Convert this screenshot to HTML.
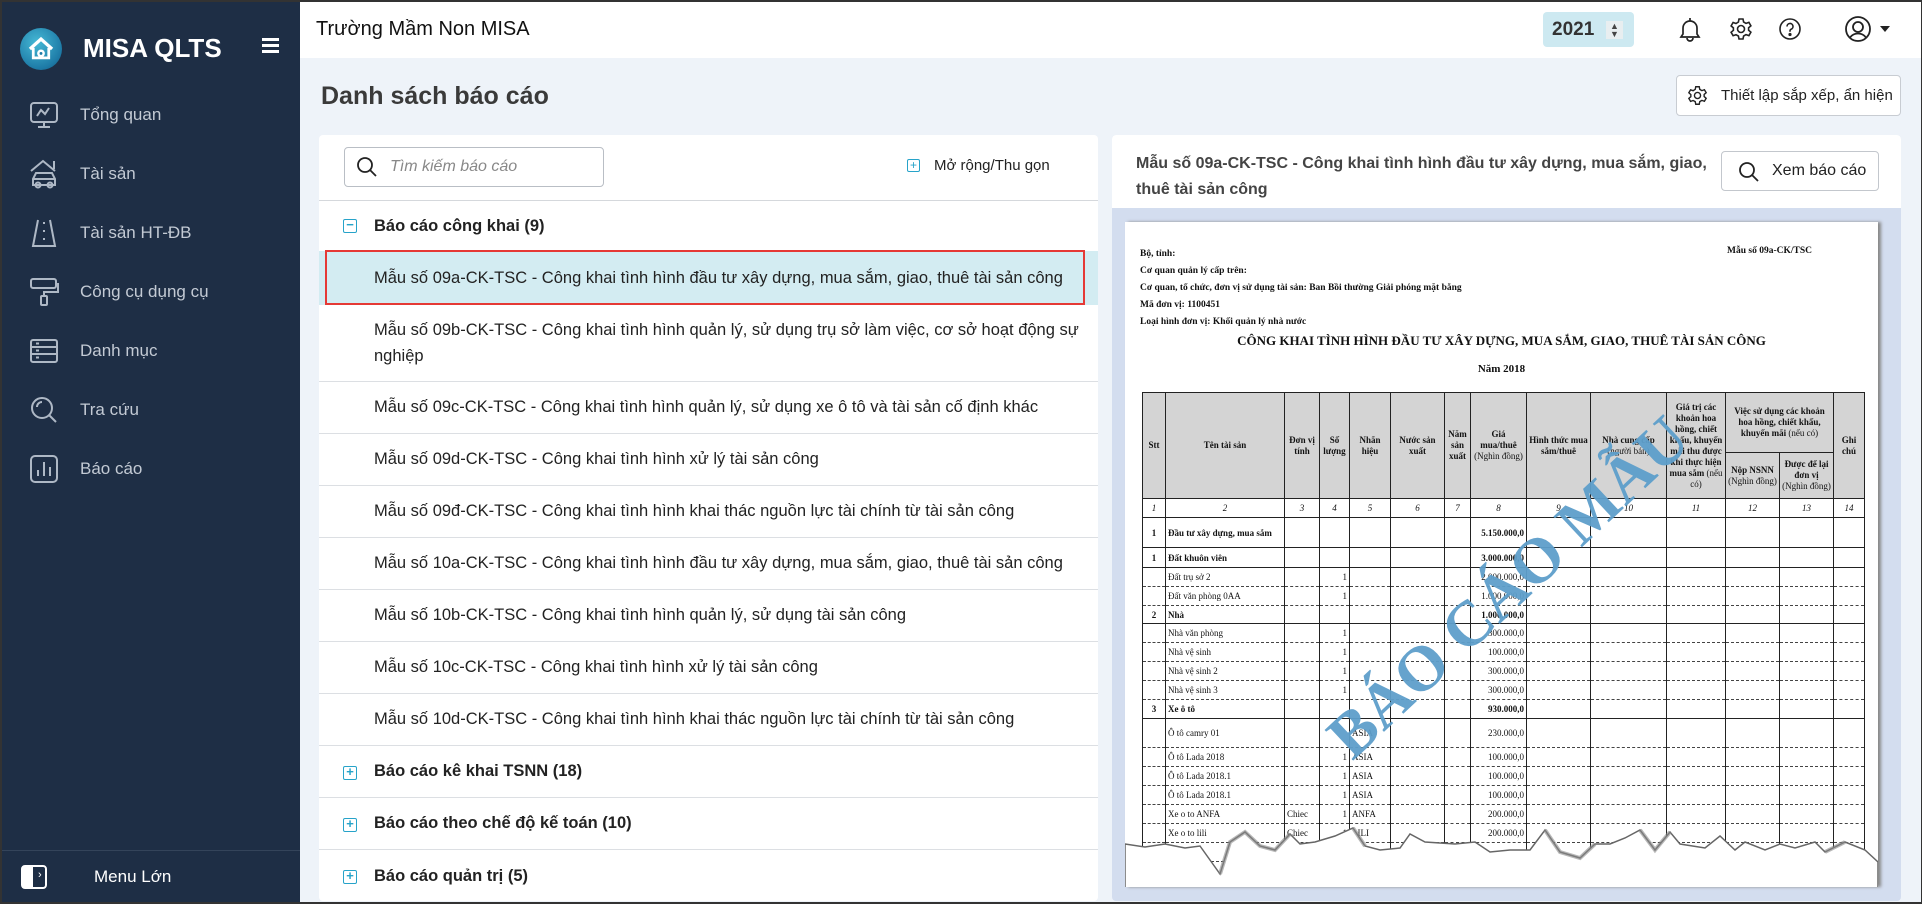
<!DOCTYPE html>
<html><head><meta charset="utf-8">
<style>
*{box-sizing:border-box;margin:0;padding:0}
body{width:1922px;height:904px;overflow:hidden;font-family:"Liberation Sans",sans-serif;background:#eef3f9;position:relative;color:#222}
.abs{position:absolute}
#frame{position:absolute;left:0;top:0;width:1922px;height:904px;border:2px solid #333;border-right-width:1px;pointer-events:none;z-index:50}
#side{left:0;top:0;width:300px;height:904px;background:#1e2e45}
.nav{position:absolute;left:28px;color:#c3cad4;font-size:17px;display:flex;align-items:center}
.nav svg{width:32px;height:32px;margin-right:20px}
#header{left:300px;top:0;width:1622px;height:58px;background:#fff}
.panel{background:#fff;border-radius:4px}
.row{position:absolute;left:0;width:779px;border-bottom:1px solid #dcdfe3;font-size:16.5px;color:#222;display:flex;align-items:center;padding-left:55px}
.grp{font-weight:bold;padding-left:55px}
.pm{position:absolute;left:24px;width:14px;height:14px;border:1.5px solid #27a3c9;border-radius:2px;color:#27a3c9;font-size:13px;line-height:10px;text-align:center;font-weight:bold}
.paper{font-family:"Liberation Serif",serif;color:#111}
table{border-collapse:collapse;table-layout:fixed;font-family:"Liberation Serif",serif;font-size:9px;color:#111}
td{border-left:1px solid #222;border-right:1px solid #222;border-bottom:1px dashed #444;padding:0 2px;overflow:hidden;white-space:nowrap}
tr.b td{border-bottom:1px solid #222;font-weight:bold}
thead td{border:1px solid #222;background:#d4d4d4;text-align:center;white-space:normal;line-height:11px;font-weight:bold}
.r{text-align:right}.c{text-align:center}
</style></head><body>
<div id="frame"></div>

<!-- SIDEBAR -->
<div id="side" class="abs">
  <div class="abs" style="left:20px;top:28px;width:42px;height:42px;border-radius:50%;background:radial-gradient(circle at 40% 35%,#46b9d6,#1d7aa6 70%,#15557a)">
    <svg width="42" height="42" viewBox="0 0 38 38"><path d="M9 19 L19 10 L29 19" fill="none" stroke="#fff" stroke-width="3"/><path d="M12 18v9h14v-9" fill="none" stroke="#fff" stroke-width="2.5"/><circle cx="19" cy="23" r="3.5" fill="#fff"/><circle cx="19" cy="23" r="1.3" fill="#1d7aa6"/></svg>
  </div>
  <div class="abs" style="left:83px;top:33px;color:#fff;font-weight:bold;font-size:26px">MISA QLTS</div>
  <div class="abs" style="left:262px;top:38px;width:17px">
    <div style="height:2.5px;background:#fff;margin-bottom:3.5px"></div><div style="height:2.5px;background:#fff;margin-bottom:3.5px"></div><div style="height:2.5px;background:#fff"></div></div>

  <div class="nav" style="top:99px"><svg viewBox="0 0 32 32" fill="none" stroke="#aeb8c5" stroke-width="2"><rect x="3" y="4" width="26" height="19" rx="3"/><path d="M9 17l4-6 4 4 4-6M16 23v5M10 28h12"/></svg>Tổng quan</div>
  <div class="nav" style="top:158px"><svg viewBox="0 0 32 32" fill="none" stroke="#aeb8c5" stroke-width="2"><path d="M3 13L15 3l12 10M26 3v8M5 21l3-6h16l3 6v6H5z M5 21h22"/><circle cx="10" cy="27" r="2.5"/><circle cx="22" cy="27" r="2.5"/></svg>Tài sản</div>
  <div class="nav" style="top:217px"><svg viewBox="0 0 32 32" fill="none" stroke="#aeb8c5" stroke-width="2"><path d="M10 3L5 29h22L22 3"/><path d="M16 5v4M16 13v4M16 21v4" stroke-dasharray="2 2"/></svg>Tài sản HT-ĐB</div>
  <div class="nav" style="top:276px"><svg viewBox="0 0 32 32" fill="none" stroke="#aeb8c5" stroke-width="2"><rect x="3" y="3" width="25" height="9" rx="2"/><path d="M28 8h2v8H16v4"/><rect x="13" y="20" width="6" height="9" rx="1"/></svg>Công cụ dụng cụ</div>
  <div class="nav" style="top:335px"><svg viewBox="0 0 32 32" fill="none" stroke="#aeb8c5" stroke-width="2"><rect x="3" y="5" width="26" height="22" rx="2"/><path d="M3 12h26M3 19h26M8 8.5h3M8 15.5h3M8 22.5h3"/></svg>Danh mục</div>
  <div class="nav" style="top:394px"><svg viewBox="0 0 32 32" fill="none" stroke="#aeb8c5" stroke-width="2"><circle cx="14" cy="14" r="10"/><path d="M21 21l7 7M9 13a5 5 0 0 1 5-5"/></svg>Tra cứu</div>
  <div class="nav" style="top:453px"><svg viewBox="0 0 32 32" fill="none" stroke="#aeb8c5" stroke-width="2"><rect x="3" y="3" width="26" height="26" rx="4"/><path d="M10 23v-6M16 23V9M22 23v-9"/></svg>Báo cáo</div>

  <div class="abs" style="left:0;top:850px;width:300px;height:1px;background:#34445a"></div>
  <div class="abs" style="left:21px;top:865px;width:26px;height:24px;border:2px solid #fff;border-radius:4px;background:linear-gradient(90deg,#fff 45%,transparent 45%)"></div>
  <div class="abs" style="left:38px;top:869px;color:#fff;font-size:11px">›</div>
  <div class="abs" style="left:94px;top:867px;color:#fff;font-size:17px">Menu Lớn</div>
</div>

<!-- HEADER -->
<div id="header" class="abs">
  <div class="abs" style="left:16px;top:18px;font-size:20px;color:#111">Trường Mầm Non MISA</div>
  <div class="abs" style="left:1243px;top:12px;width:91px;height:35px;background:#cde9f1;border-radius:4px">
    <div class="abs" style="left:9px;top:7px;font-size:19px;font-weight:bold;color:#333">2021</div>
    <div class="abs" style="left:63px;top:9px;width:17px;height:18px;background:#e8eef0;color:#444;font-size:9px;line-height:8px;text-align:center;padding-top:1px">▲<br>▼</div>
  </div>
  <svg class="abs" style="left:1378px;top:16px" width="24" height="26" viewBox="0 0 24 26" fill="none" stroke="#222" stroke-width="1.7"><path d="M12 2v3M5 18V12a7 7 0 0 1 14 0v6l2 3H3z M9 22a3 3 0 0 0 6 0"/></svg>
  <svg class="abs" style="left:1429px;top:17px" width="24" height="24" viewBox="0 0 24 24" fill="none" stroke="#222" stroke-width="1.6"><path d="M10 2h4l.6 3 2.4 1.4 2.9-1 2 3.4-2.3 2v2.4l2.3 2-2 3.4-2.9-1L14.6 19 14 22h-4l-.6-3L7 17.7l-2.9 1-2-3.4 2.3-2v-2.4l-2.3-2 2-3.4 2.9 1L9.4 5z"/><circle cx="12" cy="12" r="3.5"/></svg>
  <svg class="abs" style="left:1478px;top:17px" width="24" height="24" viewBox="0 0 24 24" fill="none" stroke="#222" stroke-width="1.6"><circle cx="12" cy="12" r="10"/><path d="M9 9.5a3 3 0 1 1 4 2.8c-.7.3-1 .8-1 1.7v.8"/><circle cx="12" cy="17.5" r=".8" fill="#222"/></svg>
  <svg class="abs" style="left:1544px;top:15px" width="28" height="28" viewBox="0 0 28 28" fill="none" stroke="#222" stroke-width="1.8"><circle cx="14" cy="14" r="12"/><circle cx="14" cy="12" r="5"/><path d="M6 22.5a10 10 0 0 1 16 0"/></svg>
  <div class="abs" style="left:1580px;top:26px;width:0;height:0;border-left:5px solid transparent;border-right:5px solid transparent;border-top:6px solid #222"></div>
</div>

<!-- Title -->
<div class="abs" style="left:321px;top:82px;font-size:25px;font-weight:bold;color:#3a3a3a">Danh sách báo cáo</div>
<div class="abs" style="left:1676px;top:75px;width:225px;height:41px;background:#fff;border:1px solid #c8ccd2;border-radius:4px;font-size:15px;color:#222;padding:11px 0 0 44px;white-space:nowrap">Thiết lập sắp xếp, ẩn hiện</div>
<svg class="abs" style="left:1687px;top:85px" width="21" height="21" viewBox="0 0 24 24" fill="none" stroke="#222" stroke-width="1.6"><path d="M10 2h4l.6 3 2.4 1.4 2.9-1 2 3.4-2.3 2v2.4l2.3 2-2 3.4-2.9-1L14.6 19 14 22h-4l-.6-3L7 17.7l-2.9 1-2-3.4 2.3-2v-2.4l-2.3-2 2-3.4 2.9 1L9.4 5z"/><circle cx="12" cy="12" r="3.5"/></svg>

<!-- LEFT PANEL -->
<div class="abs panel" style="left:319px;top:135px;width:779px;height:766px;overflow:hidden">
  <div class="abs" style="left:25px;top:12px;width:260px;height:40px;border:1px solid #b9bec5;border-radius:4px">
    <svg class="abs" style="left:11px;top:8px" width="22" height="22" viewBox="0 0 22 22" fill="none" stroke="#222" stroke-width="1.8"><circle cx="9" cy="9" r="7"/><path d="M14 14l6 6"/></svg>
    <div class="abs" style="left:45px;top:10px;font-size:16px;font-style:italic;color:#888">Tìm kiếm báo cáo</div>
  </div>
  <div class="abs" style="left:588px;top:24px;width:13px;height:13px;border:1.3px solid #27a3c9;border-radius:2px;color:#27a3c9;font-size:12px;line-height:10px;text-align:center">+</div>
  <div class="abs" style="left:615px;top:22px;font-size:15px;color:#222">Mở rộng/Thu gọn</div>
  <div class="abs" style="left:0;top:65px;width:779px;height:1px;background:#d5d8dc"></div>

  <div class="row grp" style="top:66px;height:50px;border:none"><span class="pm" style="top:18px">−</span>Báo cáo công khai (9)</div>
  <div class="row" style="top:116px;height:54px;background:#d3ecf2;border-bottom:none">Mẫu số 09a-CK-TSC - Công khai tình hình đầu tư xây dựng, mua sắm, giao, thuê tài sản công</div>
  <div class="abs" style="left:6px;top:115px;width:760px;height:55px;border:2px solid #e53935"></div>
  <div class="row" style="top:170px;height:77px;line-height:26px">Mẫu số 09b-CK-TSC - Công khai tình hình quản lý, sử dụng trụ sở làm việc, cơ sở hoạt động sự<br>nghiệp</div>
  <div class="row" style="top:247px;height:52px">Mẫu số 09c-CK-TSC - Công khai tình hình quản lý, sử dụng xe ô tô và tài sản cố định khác</div>
  <div class="row" style="top:299px;height:52px">Mẫu số 09d-CK-TSC - Công khai tình hình xử lý tài sản công</div>
  <div class="row" style="top:351px;height:52px">Mẫu số 09đ-CK-TSC - Công khai tình hình khai thác nguồn lực tài chính từ tài sản công</div>
  <div class="row" style="top:403px;height:52px">Mẫu số 10a-CK-TSC - Công khai tình hình đầu tư xây dựng, mua sắm, giao, thuê tài sản công</div>
  <div class="row" style="top:455px;height:52px">Mẫu số 10b-CK-TSC - Công khai tình hình quản lý, sử dụng tài sản công</div>
  <div class="row" style="top:507px;height:52px">Mẫu số 10c-CK-TSC - Công khai tình hình xử lý tài sản công</div>
  <div class="row" style="top:559px;height:52px">Mẫu số 10d-CK-TSC - Công khai tình hình khai thác nguồn lực tài chính từ tài sản công</div>
  <div class="row grp" style="top:611px;height:52px"><span class="pm" style="top:20px">+</span>Báo cáo kê khai TSNN (18)</div>
  <div class="row grp" style="top:663px;height:52px"><span class="pm" style="top:20px">+</span>Báo cáo theo chế độ kế toán (10)</div>
  <div class="row grp" style="top:715px;height:52px;border:none"><span class="pm" style="top:20px">+</span>Báo cáo quản trị (5)</div>
</div>

<!-- RIGHT PANEL -->
<div class="abs panel" style="left:1112px;top:135px;width:789px;height:766px;overflow:hidden;background:#d3ddef">
  <div class="abs" style="left:0;top:0;width:789px;height:73px;background:#fff"></div>
  <div class="abs" style="left:24px;top:16px;width:590px;font-size:16px;font-weight:bold;color:#444;line-height:26px">Mẫu số 09a-CK-TSC - Công khai tình hình đầu tư xây dựng, mua sắm, giao, thuê tài sản công</div>
  <div class="abs" style="left:609px;top:16px;width:158px;height:40px;border:1px solid #c3c7cd;border-radius:4px;background:#fff;font-size:16px;color:#222;padding:10px 0 0 50px">Xem báo cáo</div>
  <svg class="abs" style="left:626px;top:26px" width="22" height="22" viewBox="0 0 22 22" fill="none" stroke="#222" stroke-width="1.8"><circle cx="9" cy="9" r="7"/><path d="M14 14l6 6"/></svg>

  <!-- paper -->
  <div class="abs paper" style="left:13px;top:87px;width:753px;height:665px;background:#fff;overflow:hidden;box-shadow:3px 0 3px #888">
    <div class="abs" style="left:15px;top:24px;font-size:9.5px;font-weight:bold;line-height:17px">Bộ, tỉnh:<br>Cơ quan quản lý cấp trên:<br>Cơ quan, tổ chức, đơn vị sử dụng tài sản: Ban Bồi thường Giải phóng mặt bằng<br>Mã đơn vị: 1100451<br>Loại hình đơn vị: Khối quản lý nhà nước</div>
    <div class="abs" style="left:602px;top:24px;font-size:9.5px;font-weight:bold">Mẫu số 09a-CK/TSC</div>
    <div class="abs" style="left:0;width:753px;text-align:center;font-size:13px;font-weight:bold;top:111px">CÔNG KHAI TÌNH HÌNH ĐẦU TƯ XÂY DỰNG, MUA SẮM, GIAO, THUÊ TÀI SẢN CÔNG</div>
    <div class="abs" style="left:0;width:753px;top:141px;text-align:center;font-size:11px;font-weight:bold">Năm 2018</div>
    <table class="abs" style="left:17px;top:170px;width:722px">
      <colgroup><col style="width:23px"><col style="width:119px"><col style="width:35px"><col style="width:30px"><col style="width:41px"><col style="width:54px"><col style="width:26px"><col style="width:56px"><col style="width:64px"><col style="width:76px"><col style="width:59px"><col style="width:54px"><col style="width:54px"><col style="width:31px"></colgroup>
      <thead>
      <tr style="height:60px"><td rowspan="2">Stt</td><td rowspan="2">Tên tài sản</td><td rowspan="2">Đơn vị tính</td><td rowspan="2">Số lượng</td><td rowspan="2">Nhãn hiệu</td><td rowspan="2">Nước sản xuất</td><td rowspan="2">Năm sản xuất</td><td rowspan="2">Giá mua/thuê <span style="font-weight:normal">(Nghìn đồng)</span></td><td rowspan="2">Hình thức mua sắm/thuê</td><td rowspan="2">Nhà cung cấp <span style="font-weight:normal">(người bán)</span></td><td rowspan="2">Giá trị các khoản hoa hồng, chiết khấu, khuyến mãi thu được khi thực hiện mua sắm <span style="font-weight:normal">(nếu có)</span></td><td colspan="2">Việc sử dụng các khoản hoa hồng, chiết khấu, khuyến mãi <span style="font-weight:normal">(nếu có)</span></td><td rowspan="2">Ghi chú</td></tr>
      <tr style="height:46px"><td>Nộp NSNN <span style="font-weight:normal">(Nghìn đồng)</span></td><td>Được để lại đơn vị <span style="font-weight:normal">(Nghìn đồng)</span></td></tr>
      <tr style="height:19px"><td style="background:#fff;font-style:italic;font-weight:normal">1</td><td style="background:#fff;font-style:italic;font-weight:normal">2</td><td style="background:#fff;font-style:italic;font-weight:normal">3</td><td style="background:#fff;font-style:italic;font-weight:normal">4</td><td style="background:#fff;font-style:italic;font-weight:normal">5</td><td style="background:#fff;font-style:italic;font-weight:normal">6</td><td style="background:#fff;font-style:italic;font-weight:normal">7</td><td style="background:#fff;font-style:italic;font-weight:normal">8</td><td style="background:#fff;font-style:italic;font-weight:normal">9</td><td style="background:#fff;font-style:italic;font-weight:normal">10</td><td style="background:#fff;font-style:italic;font-weight:normal">11</td><td style="background:#fff;font-style:italic;font-weight:normal">12</td><td style="background:#fff;font-style:italic;font-weight:normal">13</td><td style="background:#fff;font-style:italic;font-weight:normal">14</td></tr>
      </thead>
      <tbody>
      <tr class="b" style="height:30px"><td class="c">1</td><td>Đầu tư xây dựng, mua sắm</td><td></td><td></td><td></td><td></td><td></td><td class="r">5.150.000,0</td><td></td><td></td><td></td><td></td><td></td><td></td></tr>
      <tr class="b" style="height:20px"><td class="c">1</td><td>Đất khuôn viên</td><td></td><td></td><td></td><td></td><td></td><td class="r">3.000.000,0</td><td></td><td></td><td></td><td></td><td></td><td></td></tr>
      <tr style="height:19px"><td></td><td>Đất trụ sở 2</td><td></td><td class="r">1</td><td></td><td></td><td></td><td class="r">2.000.000,0</td><td></td><td></td><td></td><td></td><td></td><td></td></tr>
      <tr style="height:19px"><td></td><td>Đất văn phòng 0AA</td><td></td><td class="r">1</td><td></td><td></td><td></td><td class="r">1.000.000,0</td><td></td><td></td><td></td><td></td><td></td><td></td></tr>
      <tr class="b" style="height:18px"><td class="c">2</td><td>Nhà</td><td></td><td></td><td></td><td></td><td></td><td class="r">1.000.000,0</td><td></td><td></td><td></td><td></td><td></td><td></td></tr>
      <tr style="height:19px"><td></td><td>Nhà văn phòng</td><td></td><td class="r">1</td><td></td><td></td><td></td><td class="r">300.000,0</td><td></td><td></td><td></td><td></td><td></td><td></td></tr>
      <tr style="height:19px"><td></td><td>Nhà vệ sinh</td><td></td><td class="r">1</td><td></td><td></td><td></td><td class="r">100.000,0</td><td></td><td></td><td></td><td></td><td></td><td></td></tr>
      <tr style="height:19px"><td></td><td>Nhà vệ sinh 2</td><td></td><td class="r">1</td><td></td><td></td><td></td><td class="r">300.000,0</td><td></td><td></td><td></td><td></td><td></td><td></td></tr>
      <tr style="height:19px"><td></td><td>Nhà vệ sinh 3</td><td></td><td class="r">1</td><td></td><td></td><td></td><td class="r">300.000,0</td><td></td><td></td><td></td><td></td><td></td><td></td></tr>
      <tr class="b" style="height:19px"><td class="c">3</td><td>Xe ô tô</td><td></td><td></td><td></td><td></td><td></td><td class="r">930.000,0</td><td></td><td></td><td></td><td></td><td></td><td></td></tr>
      <tr style="height:29px"><td></td><td>Ô tô camry 01</td><td></td><td></td><td>ASIA</td><td></td><td></td><td class="r">230.000,0</td><td></td><td></td><td></td><td></td><td></td><td></td></tr>
      <tr style="height:19px"><td></td><td>Ô tô Lada 2018</td><td></td><td class="r">1</td><td>ASIA</td><td></td><td></td><td class="r">100.000,0</td><td></td><td></td><td></td><td></td><td></td><td></td></tr>
      <tr style="height:19px"><td></td><td>Ô tô Lada 2018.1</td><td></td><td class="r">1</td><td>ASIA</td><td></td><td></td><td class="r">100.000,0</td><td></td><td></td><td></td><td></td><td></td><td></td></tr>
      <tr style="height:19px"><td></td><td>Ô tô Lada 2018.1</td><td></td><td class="r">1</td><td>ASIA</td><td></td><td></td><td class="r">100.000,0</td><td></td><td></td><td></td><td></td><td></td><td></td></tr>
      <tr style="height:19px"><td></td><td>Xe o to ANFA</td><td>Chiec</td><td class="r">1</td><td>ANFA</td><td></td><td></td><td class="r">200.000,0</td><td></td><td></td><td></td><td></td><td></td><td></td></tr>
      <tr style="height:19px"><td></td><td>Xe o to lili</td><td>Chiec</td><td class="r">1</td><td>LILI</td><td></td><td></td><td class="r">200.000,0</td><td></td><td></td><td></td><td></td><td></td><td></td></tr>
      <tr style="height:19px"><td></td><td></td><td></td><td></td><td></td><td></td><td></td><td></td><td></td><td></td><td></td><td></td><td></td><td></td></tr>
      </tbody>
    </table>
    <div class="abs" style="left:213px;top:487px;transform:rotate(-43deg);transform-origin:left center;font-family:'Liberation Serif',serif;font-weight:bold;font-size:64px;color:#5e9fcb;white-space:nowrap;opacity:.95">BÁO CÁO MẪU</div>
    <!-- torn edge -->
    <svg class="abs" style="left:0;top:600px" width="753" height="70" viewBox="0 0 753 70">
      <path d="M0 22 L20 25 L40 22 L60 26 L75 24 L95 52 L105 20 L120 10 L135 24 L150 28 L165 12 L175 22 L190 20 L210 14 L228 6 L240 24 L255 28 L275 26 L285 12 L300 20 L330 22 L350 20 L365 30 L385 28 L405 28 L420 8 L435 30 L455 36 L470 22 L485 22 L500 16 L515 8 L530 28 L545 10 L555 22 L580 26 L595 14 L610 28 L620 20 L640 28 L655 22 L670 26 L690 20 L700 30 L720 20 L740 28 L753 40 L753 70 L0 70 Z" fill="#fff" stroke="#666" stroke-width="1.5"/>
      <path d="M95 52 L105 20 L120 10 L135 24 L150 28 L165 12 M420 8 L435 30 L455 36 L470 22 M515 8 L530 28 L545 10 M228 6 L240 24 M700 30 L720 20" fill="none" stroke="#888" stroke-width="4" opacity=".6"/>
    </svg>
  </div>
</div>
</body></html>
